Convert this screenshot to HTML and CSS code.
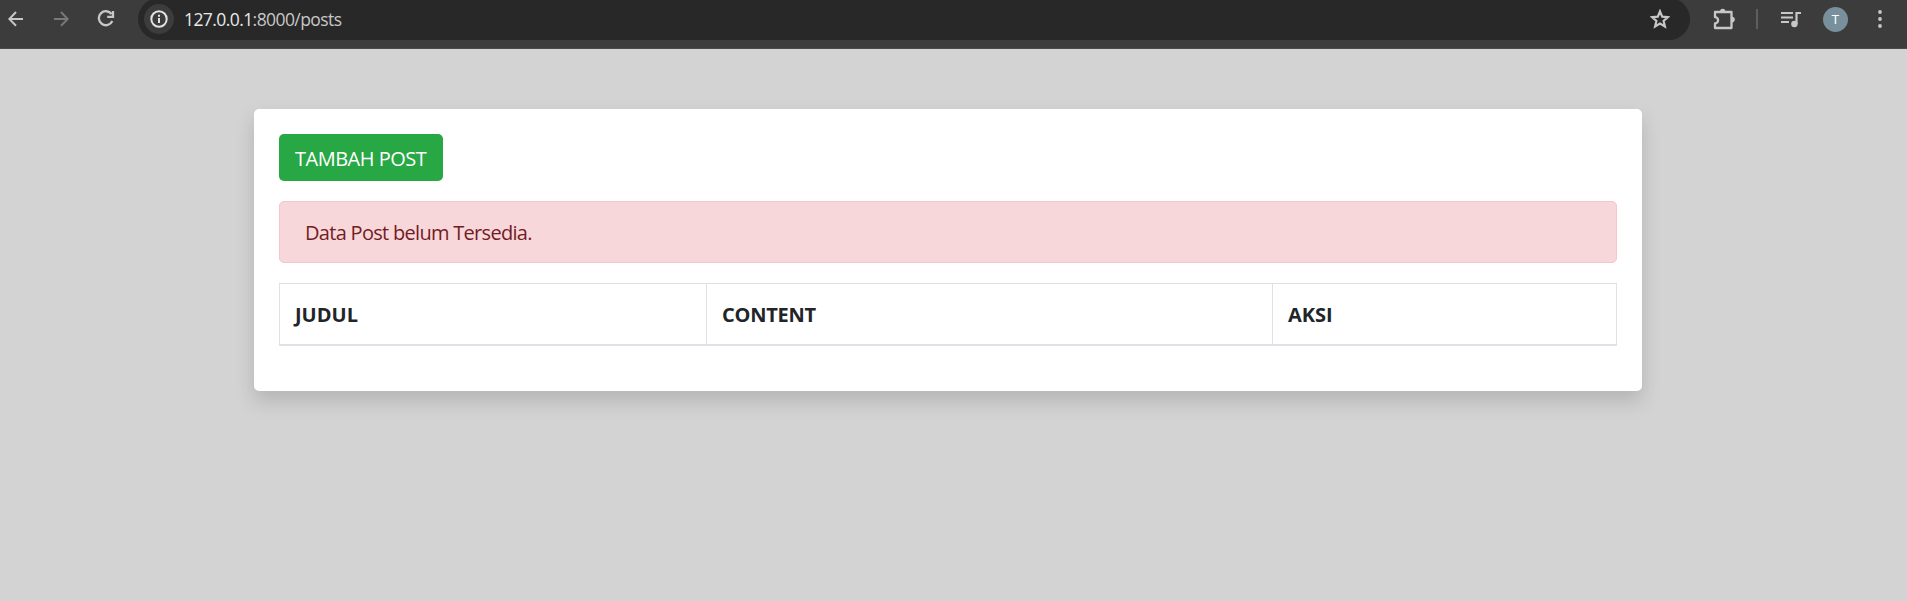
FILE: index.html
```html
<!DOCTYPE html>
<html lang="id">
<head>
<meta charset="utf-8">
<title>Data Post</title>
<link rel="stylesheet" href="styles.css">
</head>
<body>
<header class="toolbar">
  <nav class="nav">
    <svg class="icon" width="16" height="16" viewBox="0 0 16 16"><path d="M15 8H1.500M8 1 1.300 8 8 14.700"/></svg>
    <svg class="icon dim" width="16" height="16" viewBox="0 0 16 16"><path d="M1 8h13.500M8 1 14.700 8 8 14.700"/></svg>
    <svg class="icon reload" width="18" height="18" viewBox="0 0 18 18"><path d="M14.600 4.200A7 7 0 1 0 15.300 11M16 1v5.800h-5.800"/></svg>
  </nav>
  <div class="address">
    <span class="info"><svg class="icon bright" width="18" height="18" viewBox="0 0 18 18"><circle cx="9" cy="9" r="7.700"/><path d="M9 8v5M9 4.700v2"/></svg></span>
    <span class="url"><span class="host">127.0.0.1</span>:8000/posts</span>
    <svg class="icon star" width="20" height="20" viewBox="0 0 20 20"><path d="M10 2.300l2.200 5.300 5.800.5-4.400 3.800 1.300 5.600-4.900-3-4.900 3 1.300-5.600L2 8.100l5.800-.5z"/></svg>
  </div>
  <div class="tools">
    <svg class="icon puzzle" width="22" height="22" viewBox="0 0 22 22"><path d="M2 4h16.500v16H2v-4.600a3 3 0 0 0 0-6.200z" stroke-linejoin="round"/><path class="solid" d="M7 3.500a2.700 2.700 0 0 1 5.400 0zM19 8.800a2.800 2.800 0 0 1 0 5.600z"/></svg>
    <span class="divider"></span>
    <svg class="icon queue" width="20" height="17" viewBox="0 0 20 17"><path d="M0 2h12M0 6.500h12M0 11h8M15.500 13V2H20"/><circle class="solid" cx="13.400" cy="13" r="3.200"/></svg>
    <span class="avatar">T</span>
    <svg class="dots" width="4" height="18" viewBox="0 0 4 18"><circle cx="2" cy="2" r="1.900"/><circle cx="2" cy="9" r="1.900"/><circle cx="2" cy="16" r="1.900"/></svg>
  </div>
</header>
<main class="container">
  <section class="card">
    <a class="btn"><span>TAMBAH POST</span></a>
    <div class="alert">Data Post belum Tersedia.</div>
    <table class="table">
      <thead><tr><th class="title">JUDUL</th><th class="content">CONTENT</th><th class="action">AKSI</th></tr></thead>
    </table>
  </section>
</main>
</body>
</html>
```
FILE: styles.css
```css
* { box-sizing: border-box; }
body {
  margin: 0;
  min-height: 601px;
  background: #d3d3d3;
  color: #212529;
  font: 20px/30px "Open Sans", "Noto Sans", sans-serif;
}
.toolbar {
  display: flex;
  height: 49px;
  border-bottom: 1px solid #4a4a4a;
  background: #3c3c3c;
  overflow: hidden;
}
.nav {
  display: flex;
  align-items: center;
  gap: 29px;
  width: 138px;
  height: 38px;
  padding-left: 8px;
}
.icon { fill: none; stroke: #c7c7c7; stroke-width: 2; flex: none; }
.dim { stroke: #787878; }
.bright { stroke: #e3e3e3; }
.icon .solid { fill: #c7c7c7; stroke: none; }
.reload { margin-left: -1px; stroke-width: 2.3; }
.puzzle { stroke-width: 2.3; }
.queue { stroke-width: 2.2; }
.address {
  display: flex;
  align-items: center;
  width: 1552px;
  height: 42px;
  margin-top: -2px;
  padding: 0 20px 0 6px;
  border-radius: 21px;
  background: #282828;
}
.info {
  display: grid;
  place-items: center;
  width: 30px;
  height: 30px;
  border-radius: 50%;
  background: #3c3c3c;
}
.url {
  margin-left: 10px;
  color: #c7c7c7;
  font-size: 17.5px;
  letter-spacing: -0.58px;
}
.host { color: #e8e8e8; }
.star { margin-left: auto; stroke-width: 2.2; }
.tools {
  display: flex;
  align-items: center;
  height: 38px;
  padding-left: 23px;
}
.divider { width: 2px; height: 20px; margin-left: 21px; background: #5e5e5e; }
.queue { margin-left: 23px; }
.avatar {
  display: grid;
  place-items: center;
  width: 25px;
  height: 25px;
  margin-left: 22px;
  border-radius: 50%;
  background: #78909c;
  color: #fff;
  font: 13px/25px Roboto, sans-serif;
}
.dots { margin-left: 30px; fill: #c7c7c7; }
.container { padding: 60px 265px 0 254px; }
.card {
  height: 282px;
  padding: 25px;
  border-radius: 5px;
  background: #fff;
  box-shadow: 0 10px 20px rgba(0, 0, 0, 0.15);
}
.btn {
  display: block;
  width: 164px;
  height: 47px;
  margin-bottom: 20px;
  padding: 10px 0 0 16px;
  border-radius: 5px;
  background: #28a745;
  color: #fff;
  white-space: nowrap;
  letter-spacing: -0.5px;
}
.alert {
  height: 62px;
  margin-bottom: 20px;
  padding: 16px 25px;
  border: 1px solid #f5c6cb;
  border-radius: 5px;
  background: #f8d7da;
  color: #721c24;
  letter-spacing: -0.7px;
}
.table {
  width: 100%;
  border-collapse: collapse;
  table-layout: fixed;
}
.table th {
  height: 61px;
  padding: 3px 15px 0;
  border: 1px solid #dee2e6;
  border-bottom-width: 2px;
  text-align: left;
  font-weight: 700;
}
.title { width: 427px; }
.content { width: 566px; letter-spacing: -0.25px; }
```
